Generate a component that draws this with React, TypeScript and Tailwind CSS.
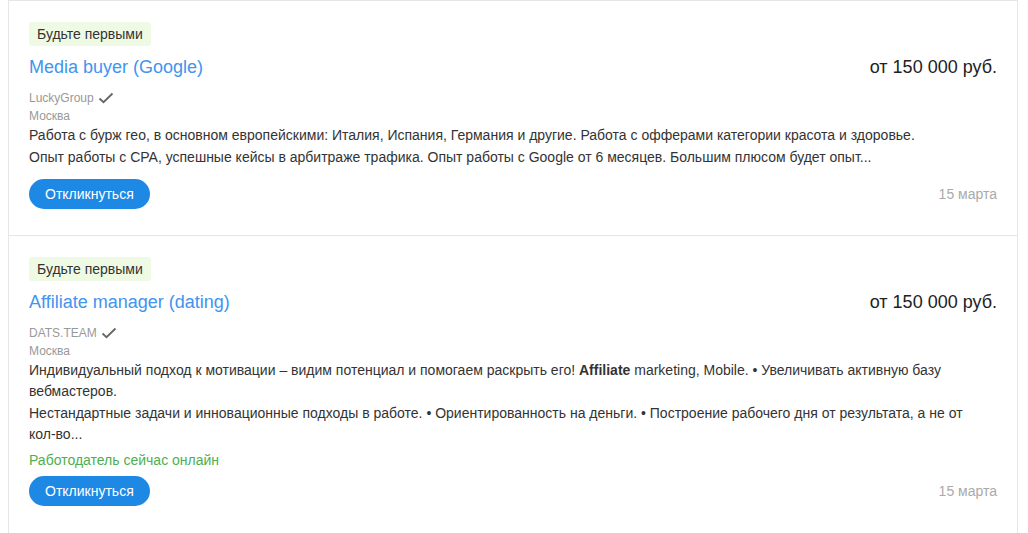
import React from "react";

function Check() {
  return (
    <svg width="16" height="12" viewBox="0 0 16 12" className="ml-1 inline-block">
      <path d="M1.5 6.5 L5.5 10.2 L14.5 1.5" fill="none" stroke="#666" strokeWidth="1.8" />
    </svg>
  );
}

type Vac = {
  title: string;
  company: string;
  desc: React.ReactNode[];
  online?: boolean;
};

function Card({ v, last }: { v: Vac; last?: boolean }) {
  return (
    <div className={"px-5 pt-[21px] pb-[26px] " + (last ? "" : "border-b border-[#e6e6e6]")}>
      <div className="inline-block rounded-[3px] bg-[#effae5] px-2 h-[24px] leading-[24px] text-[14px] text-[#333]">
        Будьте первыми
      </div>
      <div className="mt-[9px] flex items-center justify-between">
        <div className="text-[18px] leading-[24px] text-[#4194ef]">{v.title}</div>
        <div className="text-[18px] leading-[24px] text-[#222]">от 150 000 руб.</div>
      </div>
      <div className="mt-[10px] flex items-center text-[12px] leading-[18px] text-[#999]">
        {v.company}
        <Check />
      </div>
      <div className="text-[12px] leading-[18px] text-[#999]">Москва</div>
      <div className="text-[14px] leading-[21px] text-[#333]">
        {v.desc.map((d, i) => (
          <p key={i} className={i > 0 ? "mt-[1px]" : ""}>{d}</p>
        ))}
      </div>
      {v.online && (
        <div className="mt-[5px] text-[14px] leading-[20px] text-[#4caf50]">Работодатель сейчас онлайн</div>
      )}
      <div className={"flex items-center justify-between " + (v.online ? "mt-[6px]" : "mt-[11px]")}>
        <button className="h-[30px] rounded-full bg-[#1e88e5] px-4 text-[14px] text-white">Откликнуться</button>
        <span className="text-[14px] text-[#aaa]">15 марта</span>
      </div>
    </div>
  );
}

export default function App() {
  const vacs: Vac[] = [
    {
      title: "Media buyer (Google)",
      company: "LuckyGroup",
      desc: [
        "Работа с бурж гео, в основном европейскими: Италия, Испания, Германия и другие. Работа с офферами категории красота и здоровье.",
        "Опыт работы с CPA, успешные кейсы в арбитраже трафика. Опыт работы с Google от 6 месяцев. Большим плюсом будет опыт...",
      ],
    },
    {
      title: "Affiliate manager (dating)",
      company: "DATS.TEAM",
      desc: [
        <>
          Индивидуальный подход к мотивации – видим потенциал и помогаем раскрыть его! <b>Affiliate</b> marketing, Mobile. • Увеличивать активную базу вебмастеров.
        </>,
        <>
          Нестандартные задачи и инновационные подходы в работе. • Ориентированность на деньги. • Построение рабочего дня от результата, а не от <span className="whitespace-nowrap">кол-во...</span>
        </>,
      ],
      online: true,
    },
  ];
  return (
    <div className="min-h-[533px] bg-white" style={{ fontFamily: '"Liberation Sans", Arial, sans-serif' }}>
      <div className="ml-2 mr-[10px] min-h-[533px] border-x border-t border-[#e6e6e6]">
        {vacs.map((v, i) => (
          <Card key={i} v={v} last={i === vacs.length - 1} />
        ))}
      </div>
    </div>
  );
}
